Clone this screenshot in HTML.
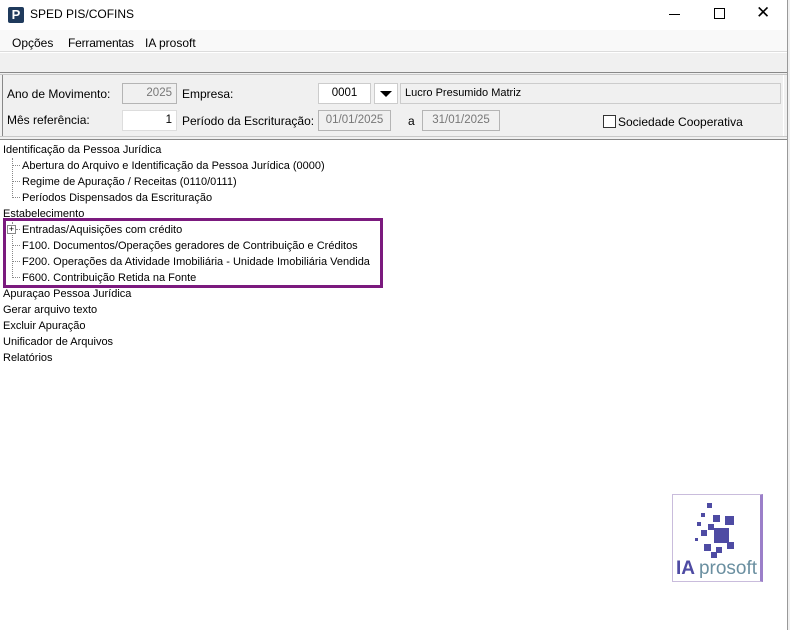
<!DOCTYPE html>
<html><head><meta charset="utf-8"><style>
*{margin:0;padding:0;box-sizing:border-box}
body{width:790px;height:630px;position:relative;background:#fff;font-family:"Liberation Sans",sans-serif;font-size:12px;color:#000;overflow:hidden}
.a{position:absolute;white-space:nowrap}
.box{position:absolute;border:1px solid #b4b4b4;height:21px;font-size:11.5px;line-height:19px;padding:0 4px}
.t{position:absolute;left:3px;font-size:11px;line-height:16px;white-space:nowrap}
.dot{position:absolute;border-left:1px dotted #888;}
.h{position:absolute;border-top:1px dotted #888;width:8px}
</style></head><body>
<div class="a" style="left:8px;top:7px;width:16px;height:16px;background:#1f3a5c;border-radius:2px;color:#fff;font-weight:bold;font-size:13px;line-height:16px;text-align:center">P</div>
<div class="a" style="left:30px;top:7px;font-size:12px">SPED PIS/COFINS</div>
<div class="a" style="left:669px;top:14px;width:11px;border-top:1px solid #000"></div>
<div class="a" style="left:714px;top:8px;width:11px;height:11px;border:1px solid #000"></div>
<div class="a" style="left:756px;top:3px;font-size:17px;font-weight:300">✕</div>
<div class="a" style="left:0;top:30px;width:787px;height:22px;background:#f9f9f9;border-bottom:1px solid #dcdcdc"></div>
<div class="a" style="left:12px;top:36px">Opções</div>
<div class="a" style="left:68px;top:36px;letter-spacing:-0.2px">Ferramentas</div>
<div class="a" style="left:145px;top:36px">IA prosoft</div>
<div class="a" style="left:0;top:53px;width:787px;height:87px;background:#f0f0f0"></div>
<div class="a" style="left:0;top:72px;width:787px;height:3px;border-top:1px solid #888;border-bottom:1px solid #c8c8c8"></div>
<div class="a" style="left:0;top:136px;width:787px;height:4px;border-top:1px solid #c8c8c8;border-bottom:1px solid #888"></div>
<div class="a" style="left:2px;top:75px;width:1px;height:61px;background:#888"></div>
<div class="a" style="left:783px;top:75px;width:1px;height:61px;background:#fff"></div>
<div class="a" style="left:787px;top:0;width:3px;height:630px;background:#f0f0f0;border-left:1px solid #999"></div>
<div class="a" style="left:7px;top:87px">Ano de Movimento:</div>
<div class="box" style="left:122px;top:83px;width:55px;text-align:right;color:#777;background:#f0f0f0">2025</div>
<div class="a" style="left:182px;top:87px">Empresa:</div>
<div class="box" style="left:318px;top:83px;width:53px;text-align:center;background:#fff;border-color:#ccc">0001</div>
<div class="box" style="left:374px;top:83px;width:24px;background:#fff;border-color:#ccc"></div>
<div class="a" style="left:380px;top:91px;width:0;height:0;border-left:6px solid transparent;border-right:6px solid transparent;border-top:6px solid #000"></div>
<div class="box" style="left:400px;top:83px;width:381px;background:#f0f0f0;border-color:#ccc;font-size:11px">Lucro Presumido Matriz</div>
<div class="a" style="left:7px;top:113px">Mês referência:</div>
<div class="box" style="left:122px;top:110px;width:55px;text-align:right;background:#fff;border-color:#ddd">1</div>
<div class="a" style="left:182px;top:114px">Período da Escrituração:</div>
<div class="box" style="left:318px;top:110px;width:73px;text-align:center;color:#777;background:#f0f0f0">01/01/2025</div>
<div class="a" style="left:408px;top:114px">a</div>
<div class="box" style="left:422px;top:110px;width:78px;text-align:center;color:#777;background:#f0f0f0">31/01/2025</div>
<div class="a" style="left:603px;top:115px;width:13px;height:13px;border:1px solid #333;background:#fff"></div>
<div class="a" style="left:618px;top:115px">Sociedade Cooperativa</div>
<div class="t" style="top:142px">Identificação da Pessoa Jurídica</div>
<div class="dot" style="left:12px;top:158px;height:40px"></div>
<div class="h" style="left:12px;top:165px"></div><div class="h" style="left:12px;top:181px"></div><div class="h" style="left:12px;top:197px"></div>
<div class="t" style="left:22px;top:158px">Abertura do Arquivo e Identificação da Pessoa Jurídica (0000)</div>
<div class="t" style="left:22px;top:174px">Regime de Apuração / Receitas (0110/0111)</div>
<div class="t" style="left:22px;top:190px">Períodos Dispensados da Escrituração</div>
<div class="t" style="top:206px">Estabelecimento</div>
<div class="dot" style="left:12px;top:222px;height:56px"></div>
<div class="h" style="left:12px;top:245px"></div><div class="h" style="left:12px;top:261px"></div><div class="h" style="left:12px;top:277px"></div>
<div class="a" style="left:7px;top:225px;width:9px;height:9px;border:1px solid #888;background:#fff;font-size:9px;line-height:7px;text-align:center">+</div>
<div class="h" style="left:16px;top:229px;width:4px"></div>
<div class="t" style="left:22px;top:222px">Entradas/Aquisições com crédito</div>
<div class="t" style="left:22px;top:238px">F100. Documentos/Operações geradores de Contribuição e Créditos</div>
<div class="t" style="left:22px;top:254px">F200. Operações da Atividade Imobiliária - Unidade Imobiliária Vendida</div>
<div class="t" style="left:22px;top:270px">F600. Contribuição Retida na Fonte</div>
<div class="a" style="left:3px;top:218px;width:380px;height:70px;border:3px solid #7b1a7e"></div>
<div class="t" style="top:286px">Apuraçao Pessoa Jurídica</div>
<div class="t" style="top:302px">Gerar arquivo texto</div>
<div class="t" style="top:318px">Excluir Apuração</div>
<div class="t" style="top:334px">Unificador de Arquivos</div>
<div class="t" style="top:350px">Relatórios</div>
<div class="a" style="left:672px;top:494px;width:91px;height:88px;border:1px solid #c9bcdc;border-right:3px solid #9b7fc9;background:#fff"></div>
<svg class="a" style="left:672px;top:494px" width="90" height="88" viewBox="0 0 90 88">
<g fill="#4e4ba3">
<rect x="35" y="9" width="5" height="5"/><rect x="29" y="19" width="4" height="4"/><rect x="41" y="21" width="7" height="7"/><rect x="53" y="22" width="9" height="9"/>
<rect x="25" y="28" width="4" height="4"/><rect x="36" y="30" width="6" height="6"/><rect x="29" y="36" width="6" height="6"/>
<rect x="42" y="34" width="15" height="15"/><rect x="23" y="44" width="3" height="3"/><rect x="32" y="50" width="7" height="7"/>
<rect x="44" y="53" width="6" height="6"/><rect x="55" y="48" width="7" height="7"/><rect x="39" y="58" width="6" height="6"/>
</g>
<text x="4" y="80" font-family="Liberation Sans,sans-serif" font-size="19" font-weight="bold" fill="#4e4ba3">IA</text>
<text x="27" y="80" font-family="Liberation Sans,sans-serif" font-size="19" fill="#6a8fa0" textLength="58" lengthAdjust="spacingAndGlyphs">prosoft</text>
</svg>
</body></html>
